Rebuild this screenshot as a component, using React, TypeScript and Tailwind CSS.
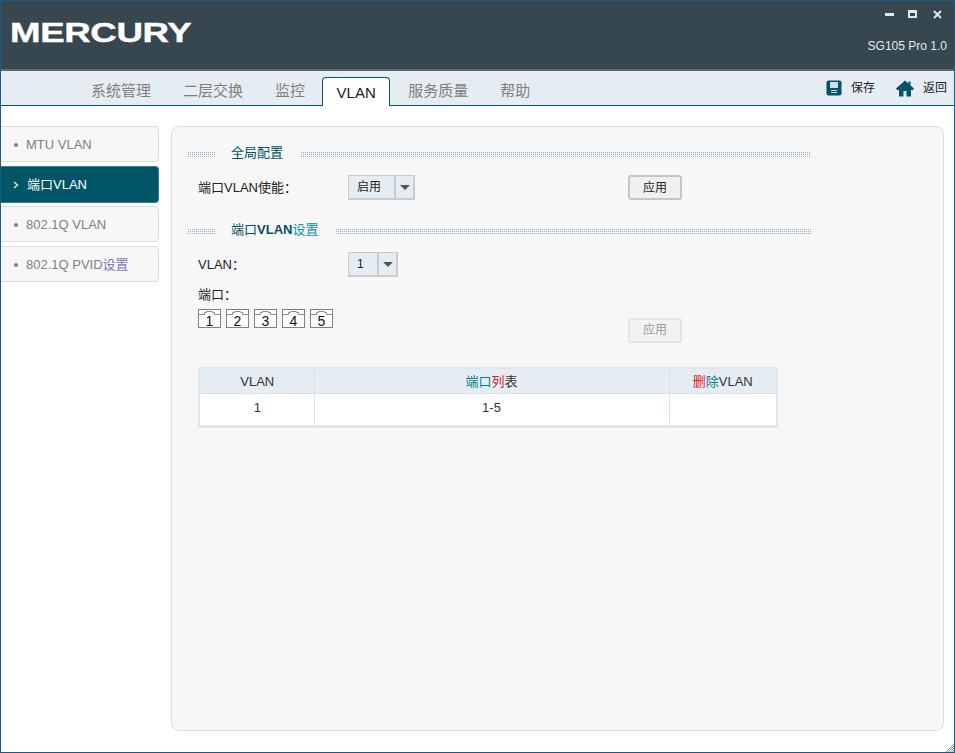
import React from "react";

const dots = "h-[6px] mt-[2px] bg-[conic-gradient(#8fadc4_25%,transparent_0)] bg-[length:2px_2px]";

function SectionTitle({ children }: { children: React.ReactNode }) {
  return (
    <div className="flex items-center w-[624px] h-[14px]">
      <div className={`${dots} w-[29px] shrink-0`} />
      <div className="ml-[15px] mr-[17px] mb-[2px] shrink-0 text-[13px] leading-[14px] text-[#00525f] whitespace-nowrap">{children}</div>
      <div className={`${dots} flex-1`} />
    </div>
  );
}

function Select({ value, w, valW }: { value: string; w: string; valW: string }) {
  return (
    <div className={`${w} h-[25px] flex border border-[#c8cccf] bg-[#e5edf2] border-b-2 border-r-2 text-[12px] text-[#222]`}>
      <div className={`${valW} flex items-center pl-[8px] border-r-2 border-[#c8cccf]`}>{value}</div>
      <div className="flex-1 flex items-center justify-center">
        <div className="w-0 h-0 border-l-[5px] border-r-[5px] border-t-[5px] border-l-transparent border-r-transparent border-t-[#555]" />
      </div>
    </div>
  );
}

function ApplyButton({ disabled }: { disabled?: boolean }) {
  return (
    <button
      className={
        disabled
          ? "w-[54px] h-[25px] rounded-[3px] border-2 border-[#e4e4e4] bg-[#f2f2f2] text-[12px] text-[#999]"
          : "w-[54px] h-[25px] rounded-[3px] border-2 border-[#c6c6c6] bg-[#f0f0f0] text-[12px] text-[#222]"
      }
    >
      应用
    </button>
  );
}

function Port({ n }: { n: number }) {
  return (
    <div className="relative w-[23px] h-[19px] bg-white border border-[#808080]">
      <svg className="absolute left-0 top-0" width="21" height="6" viewBox="0 0 21 6" fill="none">
        <path d="M0 4.5H5.5V2.5H7.5V1.5H13.5V2.5H15.5V4.5H21" stroke="#8c8c8c" strokeWidth="1" />
      </svg>
      <span className="absolute left-0 right-0 bottom-[-2px] text-center text-[14px] leading-[15px] text-[#111]">{n}</span>
    </div>
  );
}

function SideItem({ label, active }: { label: React.ReactNode; active?: boolean }) {
  if (active) {
    return (
      <div className="h-[37px] mb-[-1px] flex items-center pl-[12px] pt-[1px] rounded-r-[4px] bg-[#005566] border border-l-0 border-[#2f7f92] text-[13px] text-white">
        <svg width="6" height="8" viewBox="0 0 6 8" fill="none" className="mr-[8px]">
          <path d="M1 1L4.5 4L1 7" stroke="#e8f0f2" strokeWidth="1.2" />
        </svg>
        {label}
      </div>
    );
  }
  return (
    <div className="h-[36px] flex items-center pl-[13px] pt-[1px] rounded-r-[4px] bg-[#f7f7f7] border border-l-0 border-[#dedede] text-[13px] text-[#7f7f7f]">
      <div className="w-[4px] h-[4px] rounded-full bg-[#808080] mr-[8px]" />
      {label}
    </div>
  );
}

function Tab({ children, active }: { children: React.ReactNode; active?: boolean }) {
  return active ? (
    <div className="h-[29px] ml-[1px] mr-[2px] px-[13.5px] pt-[2px] flex items-center bg-white border border-b-0 border-[#00596b] rounded-t-[4px] text-[15px] text-[#222] mb-[-1px] relative">
      {children}
    </div>
  ) : (
    <div className="h-[29px] px-[16px] pt-[2px] flex items-center text-[15px] text-[#808080]">{children}</div>
  );
}

export default function App() {
  return (
    <div className="relative w-[955px] h-[753px] bg-white border border-[#1a5c86] overflow-hidden flex flex-col font-['Liberation_Sans','Noto_Sans_CJK_SC',sans-serif]">
      {/* header */}
      <div className="h-[68px] shrink-0 bg-[#37474f] flex justify-between">
        <div className="pl-[9px] pt-[17px]">
          <span className="inline-block origin-left scale-x-[1.31] text-[28px] leading-[30px] font-bold text-white tracking-[-0.3px] [-webkit-text-stroke:0.4px_white]">MERCURY</span>
        </div>
        <div className="flex flex-col items-end pr-[7px]">
          <div className="flex items-center h-[12px] mt-[7px] mr-[5px]">
            <div className="w-[9px] h-[3px] bg-[#e6e6e6]" />
            <div className="w-[9px] h-[8px] ml-[14px] border-2 border-t-[3px] border-[#e6e6e6]" />
            <svg width="9" height="9" viewBox="0 0 9 9" className="ml-[16px]">
              <path d="M1 1L8 8M8 1L1 8" stroke="#e6e6e6" strokeWidth="2" />
            </svg>
          </div>
          <div className="mt-[19px] text-[12px] leading-[14px] text-[#e4e9eb]">SG105 Pro 1.0</div>
        </div>
      </div>
      <div className="h-[2px] shrink-0 bg-[#5a6b70]" />
      {/* tabs */}
      <div className="h-[35px] shrink-0 bg-[#e5edf2] border-b border-[#00596b] flex justify-between items-end">
        <div className="flex items-end pl-[74px]">
          <Tab>系统管理</Tab>
          <Tab>二层交换</Tab>
          <Tab>监控</Tab>
          <Tab active>VLAN</Tab>
          <Tab>服务质量</Tab>
          <Tab>帮助</Tab>
        </div>
        <div className="flex items-center h-[34px] pr-[7px] text-[12px] text-[#222]">
          <svg width="16" height="16" viewBox="0 0 16 16">
            <rect x="0.5" y="0.5" width="15" height="15" rx="2" fill="#005566" />
            <rect x="4" y="2" width="8" height="6" fill="#cfdde3" />
            <rect x="5" y="10" width="6" height="1" fill="#cfdde3" />
            <rect x="5" y="12" width="6" height="1" fill="#cfdde3" />
          </svg>
          <span className="ml-[9px]">保存</span>
          <svg width="18" height="17" viewBox="0 0 18 17" className="ml-[21px]">
            <path d="M9 0.5L0 8.5L1 10H3V16.5H7.5V11H10.5V16.5H15V10H17L18 8.5L14.5 5.4V1.5H12.5V3.6Z" fill="#005566" />
          </svg>
          <span className="ml-[9px]">返回</span>
        </div>
      </div>
      {/* body */}
      <div className="flex-1 flex pt-[20px] pb-[21px] pr-[10px]">
        <div className="w-[158px] shrink-0 flex flex-col gap-[4px]">
          <SideItem label="MTU VLAN" />
          <SideItem active label="端口VLAN" />
          <SideItem label="802.1Q VLAN" />
          <SideItem label={<>802.1Q PVID<span className="text-[#7d78b8]">设置</span></>} />
        </div>
        <div className="flex-1 ml-[12px] bg-[#f7f7f7] border border-[#dedede] rounded-[8px] pl-[15px] pt-[20px]">
          <SectionTitle>全局配置</SectionTitle>
          <div className="flex items-center mt-[14px] pl-[11px] w-[495px] justify-between text-[13px] text-[#222]">
            <div className="flex items-center">
              <div className="w-[150px]">端口VLAN使能：</div>
              <Select value="启用" w="w-[67px]" valW="w-[47px]" />
            </div>
            <ApplyButton />
          </div>
          <div className="mt-[24px]">
            <SectionTitle>
              端口<b className="font-bold">VLAN</b><span className="text-[#1090a0]">设置</span>
            </SectionTitle>
          </div>
          <div className="flex items-center mt-[14px] pl-[11px] text-[13px] text-[#222]">
            <div className="w-[150px]">VLAN：</div>
            <Select value="1" w="w-[50px]" valW="w-[30px]" />
          </div>
          <div className="mt-[10px] pl-[11px] text-[13px] leading-[16px] text-[#222]">端口：</div>
          <div className="flex items-start justify-between w-[495px] pl-[11px] mt-[6px]">
            <div className="flex gap-[5px]">
              {[1, 2, 3, 4, 5].map((n) => (
                <Port key={n} n={n} />
              ))}
            </div>
            <div className="mt-[8px]">
              <ApplyButton disabled />
            </div>
          </div>
          <div className="ml-[11px] mt-[24px] w-[580px] border-2 border-[#e0e6ea]">
            <table className="w-full table-fixed border-collapse text-[13px] text-[#333] text-center">
              <colgroup>
                <col className="w-[114px]" />
                <col className="w-[355px]" />
                <col />
              </colgroup>
              <thead>
                <tr className="h-[25px] bg-[#e5edf2] border-b border-[#d5e2e9]">
                  <th className="font-normal pt-[1px] pl-[1px] border-r border-[#d5e2e9]">VLAN</th>
                  <th className="font-normal pt-[1px] border-r border-[#d5e2e9]">
                    <span className="text-[#0a8090]">端口</span><span className="text-[#d8202a]">列</span>表
                  </th>
                  <th className="font-normal pt-[1px]">
                    <span className="text-[#d8202a]">删</span><span className="text-[#0a8090]">除</span>VLAN
                  </th>
                </tr>
              </thead>
              <tbody>
                <tr className="h-[32px] bg-white border-b border-[#e0e6ea]">
                  <td className="pb-[3px] pl-[1px] border-r border-[#d5e2e9]">1</td>
                  <td className="pb-[3px] border-r border-[#d5e2e9]">1-5</td>
                  <td />
                </tr>
              </tbody>
            </table>
          </div>
        </div>
      </div>
      <svg className="absolute right-0 bottom-0" width="9" height="9" viewBox="0 0 9 9">
        <path d="M9 1L1 9M9 3L3 9M9 5L5 9M9 7L7 9" stroke="#9a9a9a" strokeWidth="1" />
      </svg>
    </div>
  );
}
